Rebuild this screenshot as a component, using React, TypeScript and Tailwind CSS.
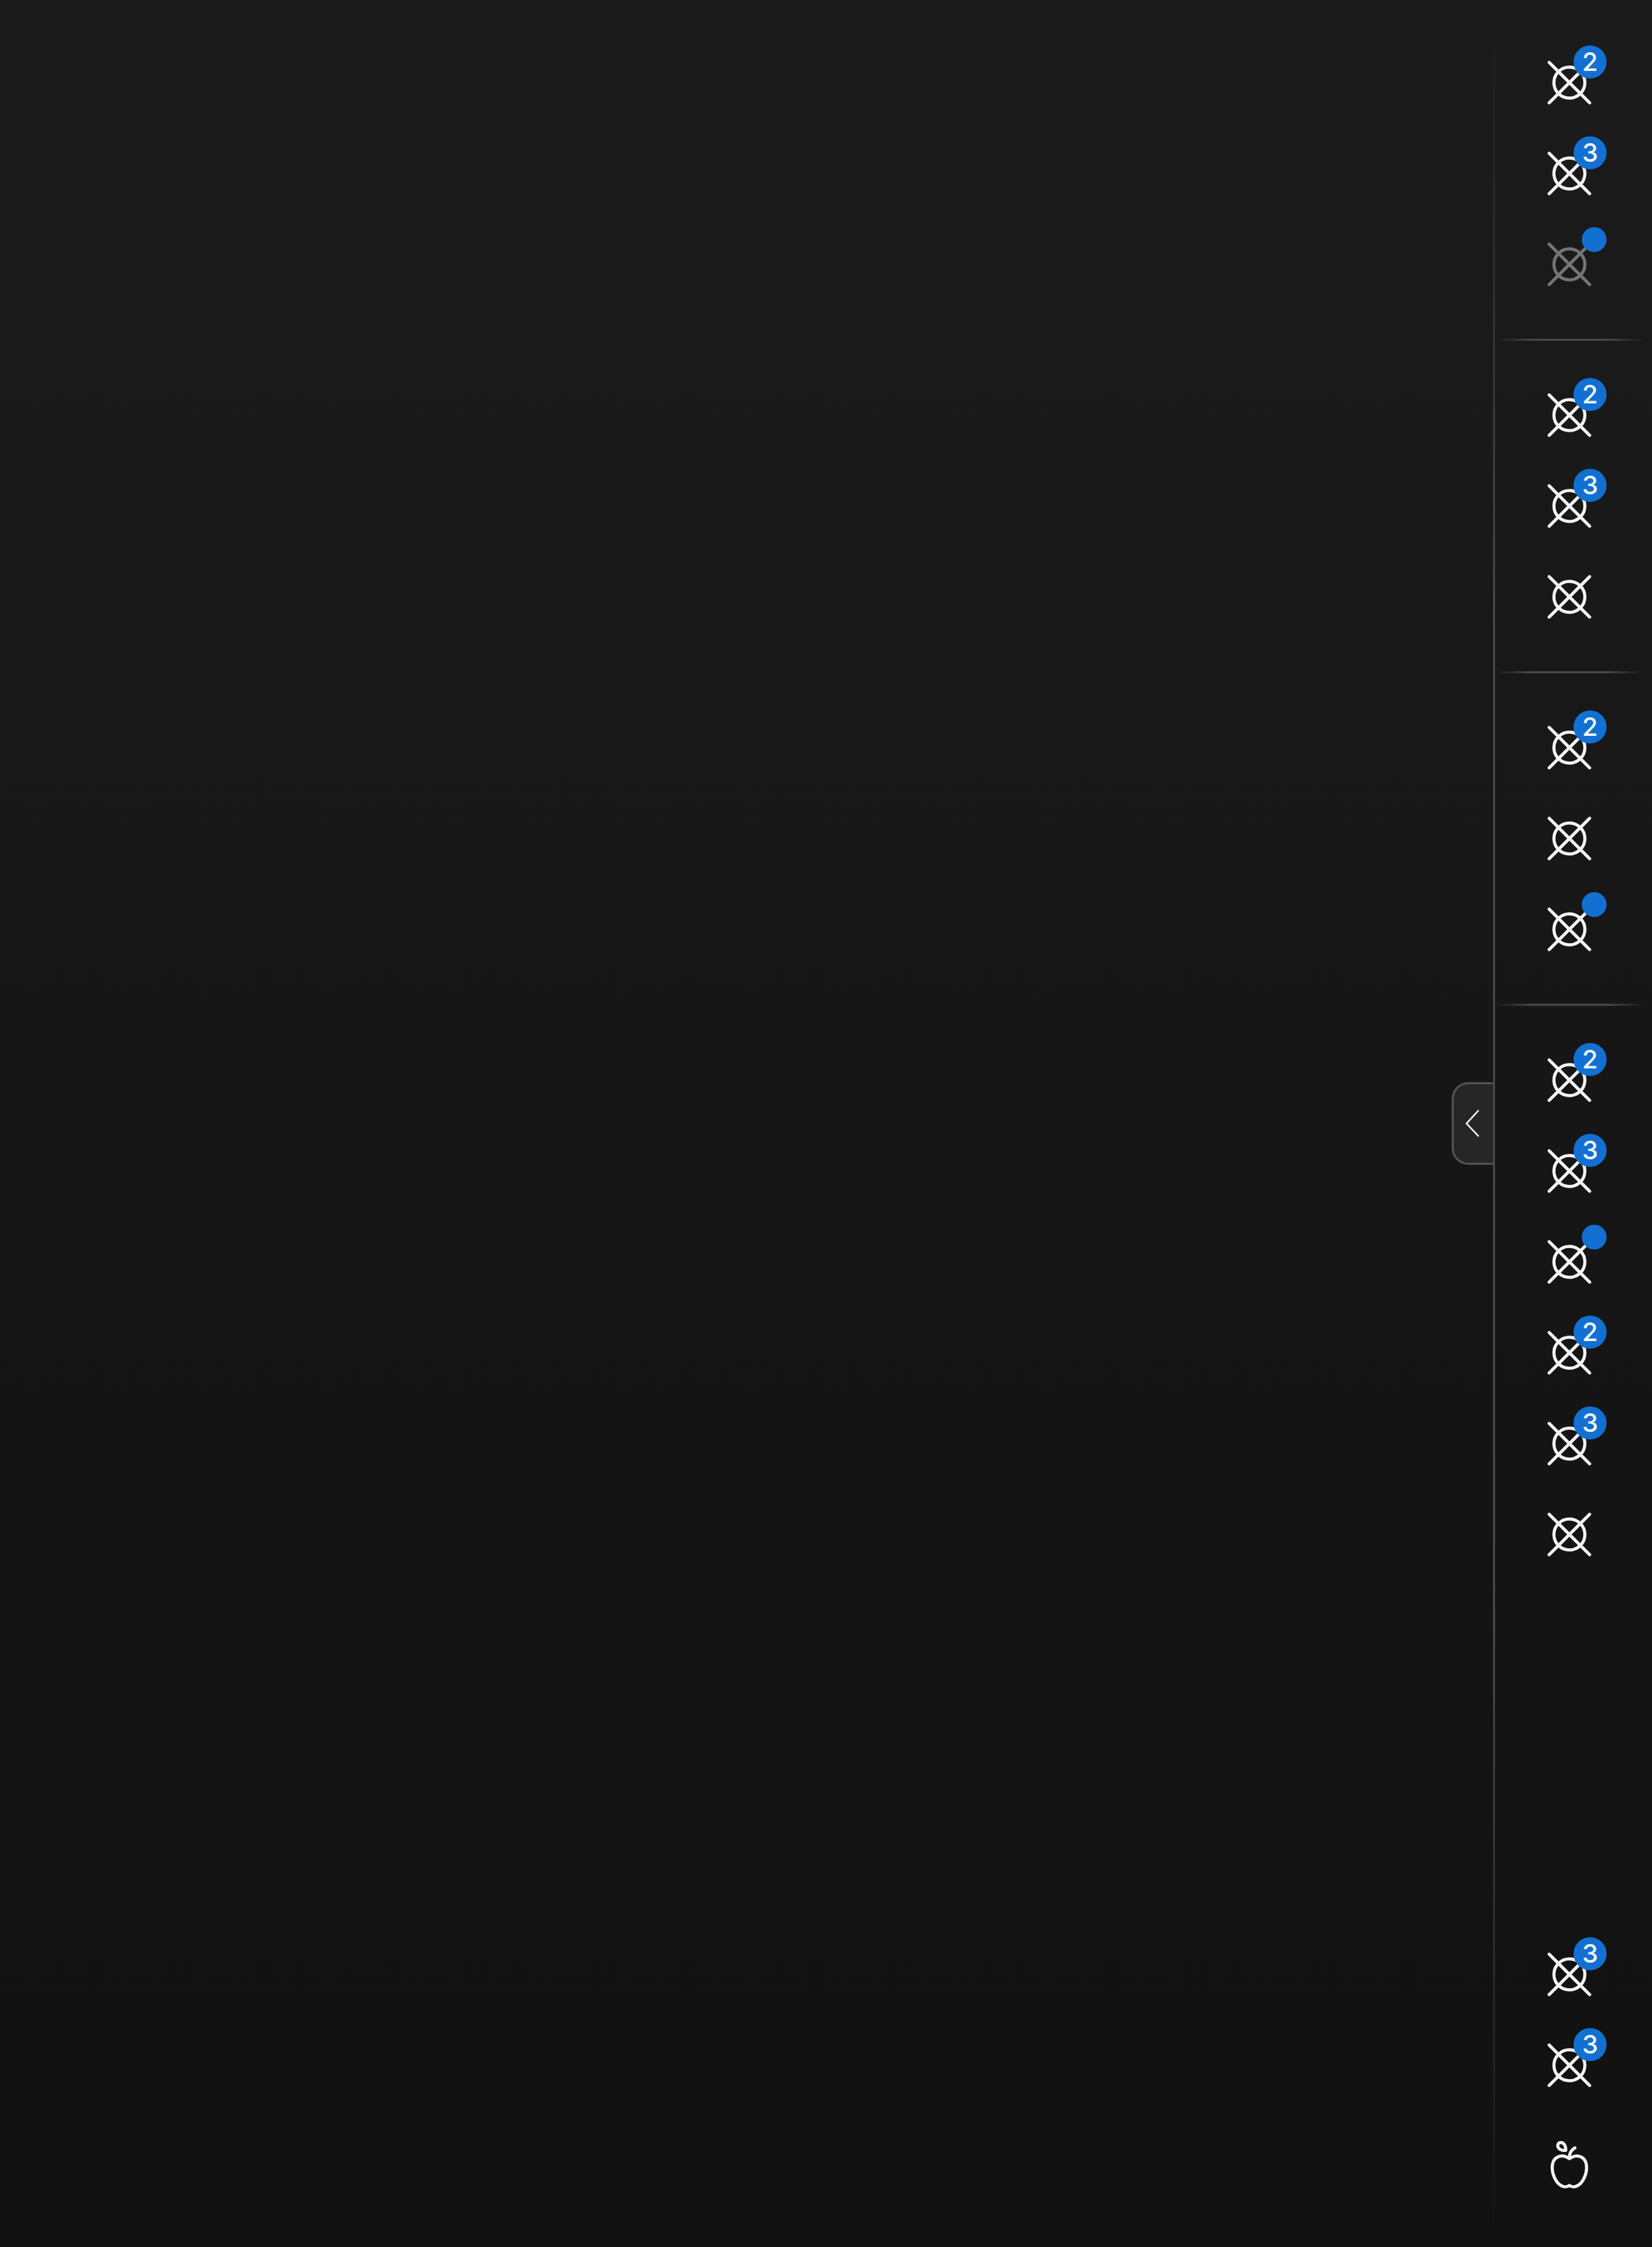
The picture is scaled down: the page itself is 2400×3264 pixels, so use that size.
type Badge = number | 'dot' | null;

interface Item {
  badge: Badge;
  disabled?: boolean;
}

const groups: Item[][] = [
  [{ badge: 2 }, { badge: 3 }, { badge: 'dot', disabled: true }],
  [{ badge: 2 }, { badge: 3 }, { badge: null }],
  [{ badge: 2 }, { badge: null }, { badge: 'dot' }],
  [{ badge: 2 }, { badge: 3 }, { badge: 'dot' }, { badge: 2 }, { badge: 3 }, { badge: null }],
];

const footer: Item[] = [{ badge: 3 }, { badge: 3 }];

function TargetIcon({ disabled }: { disabled?: boolean }) {
  return (
    <svg
      viewBox="0 0 72 72"
      fill="none"
      strokeWidth="4.5"
      strokeLinecap="round"
      className={disabled ? 'size-[72px] stroke-[#757575]' : 'size-[72px] stroke-[#f4f4f4]'}
    >
      <circle cx="36" cy="36" r="22.5" />
      <path d="M6.6 6.6 65.4 65.4M6.6 65.4 65.4 6.6" />
    </svg>
  );
}

function AppleIcon() {
  return (
    <svg
      viewBox="0 0 72 72"
      fill="none"
      strokeWidth="4.5"
      strokeLinecap="round"
      strokeLinejoin="round"
      className="size-[72px] stroke-[#f4f4f4]"
    >
      <path d="M36 27.6C31 24 26 22.900 21 24.300C13.500 26.800 11 34 11 41C11 50 16 62 23.500 66.500C27.500 69 32.500 69.500 36 66.600C39.500 69.500 44.500 69 48.500 66.500C56 62 61 50 61 41C61 34 58.500 26.800 51 24.300C46 22.900 41 24 36 27.600Z" />
      <path d="M36 26C36 20 39 15 44 12" />
      <path d="M30.700 15.600C31 9.500 28.300 4.300 23.300 4.300C20.300 4.300 18.900 6.600 19.100 9.200C19.500 13.600 24.500 16.400 30.700 15.600Z" />
    </svg>
  );
}

function BadgeMark({ badge }: { badge: Badge }) {
  if (badge === null) return null;
  if (badge === 'dot') {
    return <span className="absolute top-3 right-3 size-9 rounded-full bg-[#1270d2]" />;
  }
  return (
    <span className="absolute top-3 right-3 flex size-12 items-center justify-center rounded-full bg-[#1270d2] pb-[2px] text-[37px] leading-none font-medium text-[#f4f4f4]">
      {badge}
    </span>
  );
}

function RailButton({ item }: { item: Item }) {
  return (
    <button className="relative flex size-[132px] shrink-0 items-center justify-center">
      <TargetIcon disabled={item.disabled} />
      <BadgeMark badge={item.badge} />
    </button>
  );
}

export default function App() {
  return (
    <div className="flex h-[3264px] w-[2400px] bg-linear-to-b from-[#1b1b1b] to-[#111111] font-['Inter',sans-serif]">
      <main className="flex flex-1 items-center justify-end">
        <button className="flex h-[120px] w-[60px] items-center justify-center rounded-l-3xl border-y-3 border-l-3 border-[#525252] bg-[#262626]">
          <svg
            viewBox="0 0 60 120"
            fill="none"
            strokeWidth="2.5"
            strokeLinecap="round"
            strokeLinejoin="round"
            className="-ml-[3px] h-[120px] w-[60px] shrink-0 stroke-[#f4f4f4]"
          >
            <path d="M38.500 41.500 21.500 60 38.500 78" />
          </svg>
        </button>
      </main>
      <div className="w-[3px] bg-[linear-gradient(to_bottom,transparent,#484848_28%,#484848_72%,transparent)]" />
      <aside className="flex w-[228px] flex-col pt-[54px] pb-[54px]">
        {groups.map((group, g) => (
          <section key={g} className="flex flex-col">
            {g > 0 && (
              <div className="my-[42px] h-[3px] w-[216px] bg-[linear-gradient(to_right,transparent,#484848_25%,#484848_75%,transparent)]" />
            )}
            <div className="flex flex-col items-center pr-3">
              {group.map((item, i) => (
                <RailButton key={i} item={item} />
              ))}
            </div>
          </section>
        ))}
        <footer className="mt-auto flex flex-col items-center pr-3">
          {footer.map((item, i) => (
            <RailButton key={i} item={item} />
          ))}
          <button className="mt-3 flex size-[132px] items-center justify-center">
            <AppleIcon />
          </button>
        </footer>
      </aside>
    </div>
  );
}
